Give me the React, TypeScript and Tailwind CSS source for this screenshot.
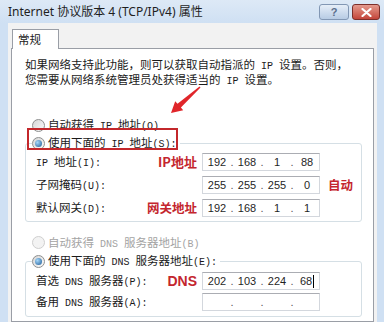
import React from 'react';
import clsx from 'clsx';

function Txt({ s }: { s: string }) {
  // SimSun style: ascii half-width, cjk full-width
  return (
    <>
      {s.split(/([ -~]+)/).map((part, i) =>
        /^[ -~]+$/.test(part) ? (
          <span key={i} className="font-['Liberation_Mono',monospace] text-[10px] whitespace-pre">
            {part}
          </span>
        ) : (
          <React.Fragment key={i}>{part}</React.Fragment>
        )
      )}
    </>
  );
}

function Radio({ checked, disabled }: { checked?: boolean; disabled?: boolean }) {
  return (
    <span
      className={clsx(
        'w-[13px] h-[13px] rounded-full border flex items-center justify-center shrink-0',
        disabled
          ? 'border-[#cfcfcf] bg-[#f3f3f3]'
          : 'border-[#8e8f8f] bg-linear-to-br from-[#d6d6d6] to-[#fbfbfb]'
      )}
    >
      {checked && (
        <span className="w-[7px] h-[7px] rounded-full bg-[radial-gradient(circle_at_35%_35%,#a6d8fa,#1c5a96)]" />
      )}
    </span>
  );
}

function RadioRow({ label, checked, disabled, h = 'h-[18px]' }: { label: string; checked?: boolean; disabled?: boolean; h?: string }) {
  return (
    <div className={clsx('flex items-center gap-[3px]', h, disabled ? 'text-[#a3a3a3]' : 'text-[#1a1a1a]')}>
      <Radio checked={checked} disabled={disabled} />
      <span className="whitespace-nowrap">
        <Txt s={label} />
      </span>
    </div>
  );
}

function IpBox({ parts, cursor }: { parts: string[]; cursor?: boolean }) {
  return (
    <div className="w-[118px] h-[18px] shrink-0 border border-[#d3d7dd] border-t-[#abadb3] bg-white flex items-center pl-[2px] font-['Liberation_Sans',sans-serif] text-[11px] text-[#1f1f1f]">
      {parts.map((p, i) => (
        <React.Fragment key={i}>
          {i > 0 && <span className="w-[6px] text-center text-[#555]">.</span>}
          <span className="w-[24px] text-center whitespace-nowrap">
            {p}
            {cursor && i === parts.length - 1 && (
              <span className="inline-block w-[1px] h-[13px] bg-black align-middle ml-[1px]" />
            )}
          </span>
        </React.Fragment>
      ))}
    </div>
  );
}

function FieldRow({ label, note, parts, side, cursor }: { label: string; note?: React.ReactNode; parts: string[]; side?: React.ReactNode; cursor?: boolean }) {
  return (
    <div className="flex items-center h-[18px] pl-[10px]">
      <span className="flex-1 whitespace-nowrap text-[#1a1a1a]">
        <Txt s={label} />
      </span>
      {note && <span className="mr-[5px] whitespace-nowrap">{note}</span>}
      <IpBox parts={parts} cursor={cursor} />
      <span className="w-[41px] pl-[8px] whitespace-nowrap">{side}</span>
    </div>
  );
}

export default function App() {
  const red = 'text-[#c4262e]';
  return (
    <div className="relative w-[384px] h-[322px] overflow-hidden bg-[#cfe0f3] flex flex-col font-['Noto_Sans_CJK_SC',sans-serif] text-[11.5px]">
      {/* title bar */}
      <div className="h-[23px] flex items-center justify-between pl-[8px] pr-[4px] bg-linear-to-b from-[#dde9f6] to-[#cfe0f3]">
        <span className="font-['Noto_Sans','Noto_Sans_CJK_SC',sans-serif] text-[12px] text-[#1e1e1e] whitespace-nowrap">
          Internet 协议版本 4 (TCP/IPv4) 属性
        </span>
        <div className="flex gap-[3px] self-start mt-[4px]">
          <div className="w-[30px] h-[16px] rounded-[3px] border border-[#8297b4] bg-linear-to-b from-[#e6eef8] to-[#b7cbe4] flex items-center justify-center text-[11px] font-bold text-[#5a6f8c] font-['Liberation_Sans',sans-serif]">
            ?
          </div>
          <div className="w-[28px] h-[16px] rounded-[3px] border border-[#7c2f2a] bg-linear-to-b from-[#e49a8e] to-[#c3443a] flex items-center justify-center">
            <svg width="11" height="9" viewBox="0 0 11 9">
              <path d="M1.5 1 L9.5 8 M9.5 1 L1.5 8" stroke="white" strokeWidth="2.2" strokeLinecap="round" />
            </svg>
          </div>
        </div>
      </div>

      {/* dialog body */}
      <div className="flex-1 ml-[8px] mr-[7px] bg-[#f2f2f2] pt-[6px] px-[3px] flex flex-col">
        <div className="relative z-10 -mb-[1px] ml-[1px] w-[47px] h-[20px] border border-b-0 border-[#9a9ea6] bg-white flex items-center pl-[5px] text-[#1a1a1a]">
          常规
        </div>
        <div className="flex-1 border border-[#9a9ea6] bg-white pt-[9px] pl-[13px] pr-[11px]">
          <p className="leading-[13px] text-[#1a1a1a] whitespace-nowrap">
            <Txt s="如果网络支持此功能，则可以获取自动指派的 IP 设置。否则，" />
            <br />
            <Txt s="您需要从网络系统管理员处获得适当的 IP 设置。" />
          </p>

          <div className="mt-[28px] pl-[7px]">
            <RadioRow label="自动获得 IP 地址(O)" />
          </div>

          <fieldset className="border border-[#d5dfe5] rounded-[3px] pb-[4px]">
            <legend className="ml-[6px] pr-[3px]">
              <RadioRow label="使用下面的 IP 地址(S):" checked />
            </legend>
            <div className="mt-[1px] flex flex-col gap-[5px]">
              <FieldRow
                label="IP 地址(I):"
                note={<span className={clsx(red, 'font-bold text-[13px]')}>IP地址</span>}
                parts={['192', '168', '1', '88']}
              />
              <FieldRow
                label="子网掩码(U):"
                parts={['255', '255', '255', '0']}
                side={<span className={clsx(red, 'font-semibold text-[12.5px]')}>自动</span>}
              />
              <FieldRow
                label="默认网关(D):"
                note={<span className={clsx(red, 'font-semibold text-[12.5px]')}>网关地址</span>}
                parts={['192', '168', '1', '1']}
              />
            </div>
          </fieldset>

          <div className="mt-[11px] pl-[7px]">
            <RadioRow label="自动获得 DNS 服务器地址(B)" disabled h="h-[19px]" />
          </div>

          <fieldset className="border border-[#d5dfe5] rounded-[3px] pb-[5px]">
            <legend className="ml-[6px] pr-[3px]">
              <RadioRow label="使用下面的 DNS 服务器地址(E):" checked />
            </legend>
            <div className="mt-[2px] flex flex-col gap-[3px]">
              <FieldRow
                label="首选 DNS 服务器(P):"
                note={<span className={clsx(red, "font-bold text-[14px] font-['Liberation_Sans',sans-serif]")}>DNS</span>}
                parts={['202', '103', '224', '68']}
                cursor
              />
              <FieldRow label="备用 DNS 服务器(A):" parts={['', '', '', '']} />
            </div>
          </fieldset>
        </div>
      </div>

      {/* annotations */}
      <div className="absolute left-[27px] top-[128px] w-[151px] h-[22px] border-[2px] border-[#c3272b]" />
      <svg className="absolute left-0 top-0" width="384" height="322" viewBox="0 0 384 322">
        <polygon
          points="200.5,87.6 180.9,107.6 183.2,110.2 171,113 175.2,101.2 177.5,103.8 199.5,86.4"
          fill="#e0262a"
        />
      </svg>
    </div>
  );
}
